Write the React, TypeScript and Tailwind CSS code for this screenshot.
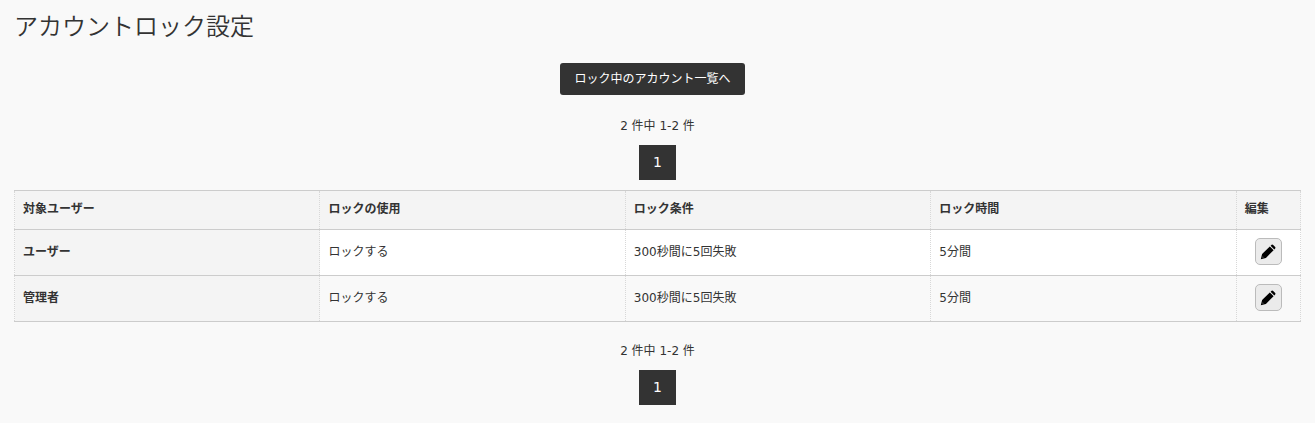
type LockRule = {
  target: string;
  usage: string;
  condition: string;
  duration: string;
};

const rules: LockRule[] = [
  { target: "ユーザー", usage: "ロックする", condition: "300秒間に5回失敗", duration: "5分間" },
  { target: "管理者", usage: "ロックする", condition: "300秒間に5回失敗", duration: "5分間" },
];

const headings = ["対象ユーザー", "ロックの使用", "ロック条件", "ロック時間", "編集"];

const cell = "border-x border-dotted border-x-[#d8d8d8] px-2 pb-0.5 text-left";

function PencilIcon() {
  return (
    <svg viewBox="0 0 16 16" className="size-4" fill="#000" aria-hidden="true">
      <path d="M10.6 1.7 11.6.8Q12.4.2 13.2.9L15.2 2.9Q15.8 3.7 15.2 4.5L14.3 5.4Z" />
      <path d="M9.8 2.4 13.6 6.2 5.9 13.9.8 15.2 2.1 10.1ZM2.8 12.4 2.5 13.2 2.8 13.5 3.6 13.2Z" fillRule="evenodd" />
    </svg>
  );
}

function Pager() {
  return (
    <nav aria-label="ページ" className="flex flex-col items-center">
      <p className="leading-5">2 件中 1-2 件</p>
      <a
        href="#page-1"
        aria-current="page"
        className="mt-[9px] bg-[#333] px-[14px] text-sm leading-[35px] text-white"
      >
        1
      </a>
    </nav>
  );
}

export default function App() {
  return (
    <main className="min-h-screen bg-[#f9f9f9] px-[14px] pt-2 pb-[18px] font-['DejaVu_Sans','Noto_Sans_CJK_JP',sans-serif] text-xs text-[#333]">
      <h1 className="text-2xl leading-[34px] font-[350] font-['Noto_Sans_CJK_JP',sans-serif]">アカウントロック設定</h1>
      <div className="mt-[21px] flex justify-center pr-[10px]">
        <button type="button" className="h-8 rounded-[3px] bg-[#333] px-[14px] text-white">
          ロック中のアカウント一覧へ
        </button>
      </div>
      <div className="mt-[21px]">
        <Pager />
      </div>
      <table className="mt-[10px] w-full table-fixed border-collapse">
        <colgroup>
          <col className="w-[23.75%]" />
          <col className="w-[23.75%]" />
          <col className="w-[23.75%]" />
          <col className="w-[23.75%]" />
          <col className="w-[5%]" />
        </colgroup>
        <thead>
          <tr className="h-[39px] border-y border-[#ccc] bg-[#f4f4f4]">
            {headings.map((heading) => (
              <th key={heading} scope="col" className={`${cell} font-bold`}>
                {heading}
              </th>
            ))}
          </tr>
        </thead>
        <tbody>
          {rules.map((rule) => (
            <tr key={rule.target} className="h-[46px] border-y border-[#ccc] odd:bg-white even:bg-[#f9f9f9]">
              <th scope="row" className={`${cell} bg-[#f4f4f4] font-bold`}>{rule.target}</th>
              <td className={cell}>{rule.usage}</td>
              <td className={cell}>{rule.condition}</td>
              <td className={cell}>{rule.duration}</td>
              <td className={cell}>
                <button
                  type="button"
                  aria-label={`${rule.target}を編集`}
                  className="mx-auto flex size-[27px] items-center justify-center rounded-[5px] border border-[#bbb] bg-[#ebebeb]"
                >
                  <PencilIcon />
                </button>
              </td>
            </tr>
          ))}
        </tbody>
      </table>
      <div className="mt-[19px]">
        <Pager />
      </div>
    </main>
  );
}
